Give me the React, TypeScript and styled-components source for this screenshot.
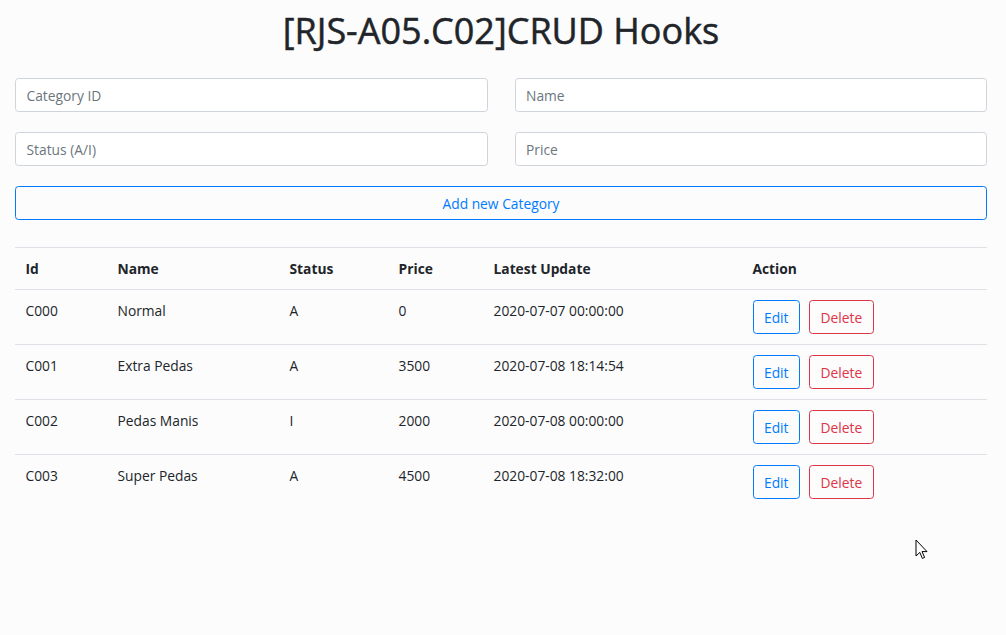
import React from "react";
import styled, { createGlobalStyle } from "styled-components";

const GlobalStyle = createGlobalStyle`
  html { font-size: 14px; }
  body {
    margin: 0;
    background: #fcfcfd;
    color: #212529;
    font-family: "Open Sans", "Noto Sans", "Liberation Sans", sans-serif;
    font-size: 14px;
    line-height: 1.5;
  }
  * { box-sizing: border-box; }
`;

const Page = styled.div`
  position: relative;
  min-height: 635px;
  padding: 10px 19px 0 15px;
`;

const Title = styled.h1`
  margin: 0 0 26px;
  text-align: center;
  font-size: 36px;
  font-weight: 500;
  line-height: 42px;
  color: #212529;
  -webkit-text-stroke: 0.5px #212529;
`;

const FormGrid = styled.div`
  display: grid;
  grid-template-columns: 1fr 1fr;
  column-gap: 27px;
  row-gap: 20px;
`;

const Input = styled.input`
  display: block;
  width: 100%;
  height: 34px;
  padding: 0 10.5px;
  font-family: inherit;
  font-size: 13.8px;
  color: #495057;
  background: #fff;
  border: 1px solid #ced4da;
  border-radius: 3.5px;
  outline: none;
  &::placeholder { color: #6c757d; opacity: 1; }
`;

const BlockButton = styled.button`
  display: block;
  width: 100%;
  height: 34px;
  margin-top: 20px;
  font-family: inherit;
  font-size: 13.8px;
  color: #007bff;
  background: transparent;
  border: 1px solid #007bff;
  border-radius: 3.5px;
  cursor: pointer;
`;

const Table = styled.table`
  width: 100%;
  margin-top: 27px;
  border-collapse: collapse;
  table-layout: fixed;
  font-size: 13.8px;
`;

const HeadCell = styled.th<{ $w: number }>`
  width: ${(p) => p.$w}px;
  padding: 10px 10.5px 10px;
  text-align: left;
  font-weight: 700;
  line-height: 21px;
  vertical-align: top;
  border-top: 1px solid #dee2e6;
`;

const Cell = styled.td`
  padding: 10px 10.5px 10px;
  line-height: 21px;
  vertical-align: top;
  border-top: 1px solid #dee2e6;
  white-space: nowrap;
`;

const Actions = styled.div`
  display: flex;
  gap: 9px;
`;

const ActionButton = styled.button<{ $tone: "primary" | "danger" }>`
  height: 34px;
  padding: 0 10.5px;
  font-family: inherit;
  font-size: 13.8px;
  line-height: 21px;
  background: transparent;
  color: ${(p) => (p.$tone === "primary" ? "#007bff" : "#dc3545")};
  border: 1px solid ${(p) => (p.$tone === "primary" ? "#007bff" : "#dc3545")};
  border-radius: 3.5px;
  cursor: pointer;
`;

const Cursor = styled.svg`
  position: absolute;
  left: 915px;
  top: 539px;
`;

const columns: [string, number][] = [
  ["Id", 92],
  ["Name", 172],
  ["Status", 109],
  ["Price", 95],
  ["Latest Update", 259],
  ["Action", 245],
];

const rows = [
  ["C000", "Normal", "A", "0", "2020-07-07 00:00:00"],
  ["C001", "Extra Pedas", "A", "3500", "2020-07-08 18:14:54"],
  ["C002", "Pedas Manis", "I", "2000", "2020-07-08 00:00:00"],
  ["C003", "Super Pedas", "A", "4500", "2020-07-08 18:32:00"],
];

export default function App() {
  return (
    <>
      <GlobalStyle />
      <Page>
        <Title>[RJS-A05.C02]CRUD Hooks</Title>
        <FormGrid>
          <Input placeholder="Category ID" />
          <Input placeholder="Name" />
          <Input placeholder="Status (A/I)" />
          <Input placeholder="Price" />
        </FormGrid>
        <BlockButton>Add new Category</BlockButton>
        <Table>
          <thead>
            <tr>
              {columns.map(([label, w]) => (
                <HeadCell key={label} $w={w}>
                  {label}
                </HeadCell>
              ))}
            </tr>
          </thead>
          <tbody>
            {rows.map((r) => (
              <tr key={r[0]}>
                {r.map((v, i) => (
                  <Cell key={i}>{v}</Cell>
                ))}
                <Cell>
                  <Actions>
                    <ActionButton $tone="primary">Edit</ActionButton>
                    <ActionButton $tone="danger">Delete</ActionButton>
                  </Actions>
                </Cell>
              </tr>
            ))}
          </tbody>
        </Table>
        <Cursor width="13" height="21" viewBox="0 0 13 21">
          <path
            d="M1 1 L1 17 L4.8 13.4 L7.4 19.4 L9.6 18.4 L7 12.6 L12 12.6 Z"
            fill="#fff"
            stroke="#000"
            strokeWidth="1"
            strokeLinejoin="miter"
          />
        </Cursor>
      </Page>
    </>
  );
}
